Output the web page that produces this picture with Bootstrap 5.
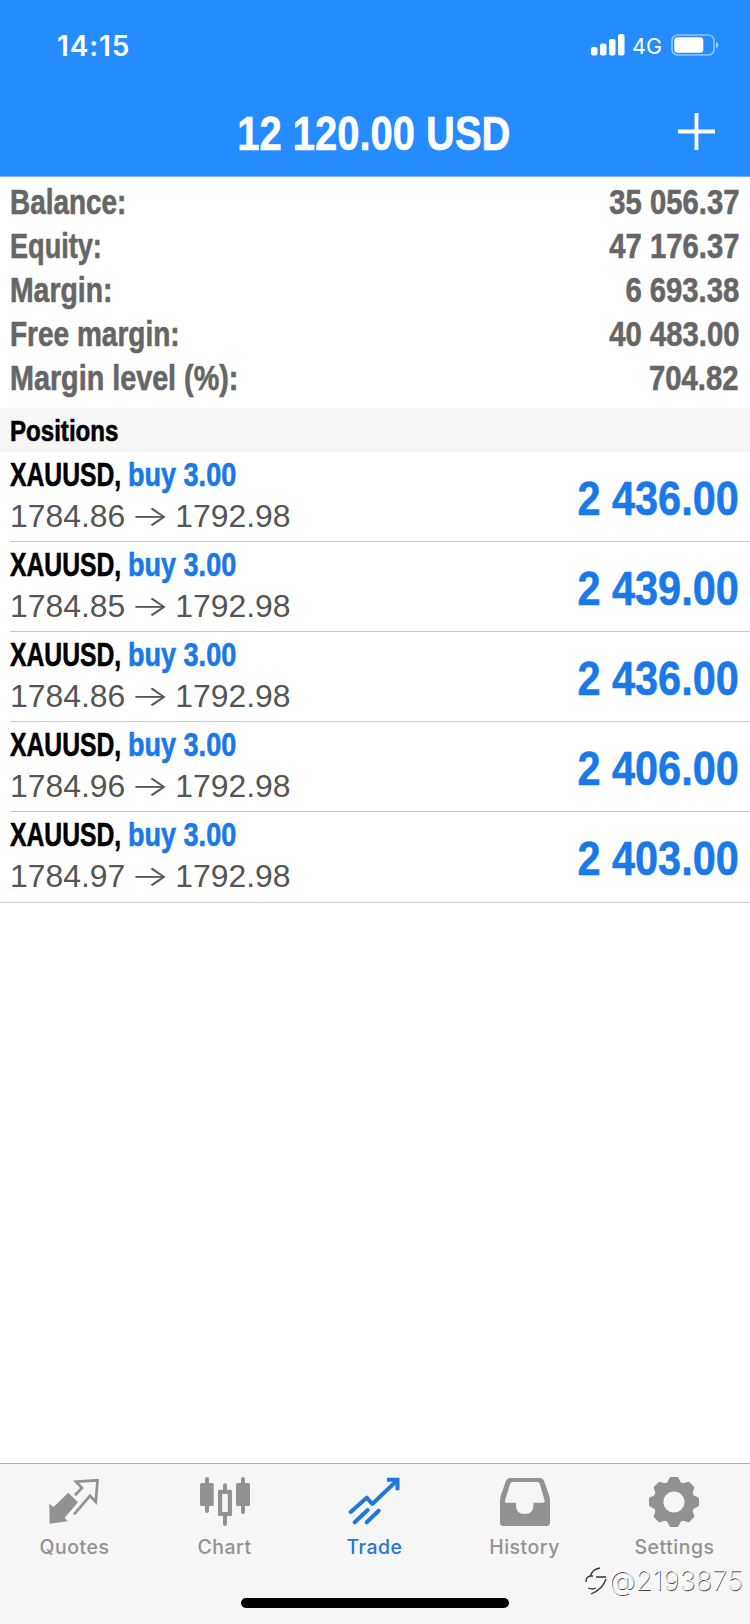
<!DOCTYPE html>
<html lang="en">
<head>
<meta charset="utf-8">
<meta name="viewport" content="width=device-width, initial-scale=1">
<title>Trade</title>
<link href="https://cdn.jsdelivr.net/npm/bootstrap@5.3.0/dist/css/bootstrap.min.css" rel="stylesheet">
<style>
  body { font-family: "Liberation Sans", Arial, sans-serif; background: #fff; color: #000; }
  .screen { width: 750px; height: 1624px; overflow: hidden; }
  .top-area { height: 177px; background: #258cff; border-bottom: 1px solid #7fb0e8; color: #fff; }
  .status { height: 90px; padding: 0 31px 0 57px; font-family: Inter, sans-serif; }
  .clock { font-size: 28px; font-weight: 600; letter-spacing: .9px; line-height: 92px; }
  .net { font-size: 21.5px; line-height: 90px; margin: 2px 9px 0 7px; }
  .title-bar { height: 86px; }
  .plus { right: 35px; top: 23px; line-height: 0; }

  /* condensed lettering */
  .narrow { display: inline-block; font-weight: 700; white-space: nowrap; transform: scaleX(.822); transform-origin: left; -webkit-text-stroke: .6px currentColor; }
  .narrow-end { transform: scaleX(.848); transform-origin: right; }
  .total { font-size: 48.5px; line-height: 86px; transform: translateX(-1px) scaleX(.824); transform-origin: center; }

  .summary { height: 231px; padding: 3px 11px 0 10px; color: #666; font-size: 34.5px; }
  .summary > div { height: 44px; line-height: 44px; }
  .k-balance { transform: scaleX(.809); }
  .k-equity { transform: scaleX(.786); }
  .k-free { transform: scaleX(.812); }
  .k-level { transform: scaleX(.833); }
  .section-title { height: 44px; line-height: 45px; padding-left: 10px; background: #f6f6f6; font-size: 30px; }
  .section-title .narrow { transform: scaleX(.803); }
  .deal { height: 90px; margin-left: 10px; padding-right: 11px; border-bottom: 1px solid #c8c8cb; }
  .deal:last-child { height: 91px; margin-left: 0; padding-left: 10px; }
  .sym { font-size: 32.5px; line-height: 40px; padding-top: 3px; height: 44px; }
  .ticker { width: 118px; }
  .ticker .narrow { transform: scaleX(.76); }
  .side { color: #1a79e8; transform: scaleX(.832); }
  .quote-row { font-size: 31.9px; line-height: 40px; color: #555; height: 40px; white-space: nowrap; }
  .to { display: inline-block; width: 50px; line-height: 30px; text-align: center; font-family: Inter, sans-serif; font-weight: 300; font-size: 29px; transform: translateY(-1px) scaleX(1.42); }
  .profit { font-size: 48.5px; line-height: 92px; color: #1a79e8; transform: scaleX(.855); }

  .tabs { height: 161px; background: #f6f6f6; border-top: 1px solid #b2b2b2; }
  .tab { width: 150px; color: #929292; font: 500 19.4px/24px Inter, sans-serif; letter-spacing: .55px; padding-top: 12px; }
  .tab svg { display: block; margin: 0 auto 5px; }
  .tab span { display: block; margin-left: -1px; }
  .tab.on { color: #2277dc; }
  .home { left: 241px; top: 134px; width: 268px; height: 10px; border-radius: 5px; background: #000; }
  .stamp { left: 584px; top: 101px; color: #fbfbfb; font: 200 27px/32px Inter, sans-serif; letter-spacing: .3px; text-shadow: .7px .8px .6px #444; white-space: nowrap; }
</style>
</head>
<body>
<main class="screen d-flex flex-column">
  <header class="top-area">
    <div class="status d-flex justify-content-between">
      <span class="clock">14:15</span>
      <div class="d-flex align-items-center">
        <svg width="34" height="22" viewBox="0 0 34 22" fill="#fff"><rect x="0" y="13" width="6.5" height="8.5" rx="2"/><rect x="9" y="9.5" width="6.5" height="12" rx="2"/><rect x="18" y="5" width="6.5" height="16.5" rx="2"/><rect x="27" y="0" width="6.5" height="21.5" rx="2"/></svg>
        <span class="net">4G</span>
        <svg width="48" height="22" viewBox="0 0 48 22"><rect x="1" y="1" width="42" height="20" rx="5.5" fill="none" stroke="#fff" stroke-opacity=".5" stroke-width="1.6"/><rect x="3.3" y="3.3" width="29" height="15.4" rx="3" fill="#fff"/><path d="M45 7.5q2.5 1 2.5 3.5t-2.5 3.5z" fill="#fff" fill-opacity=".55"/></svg>
      </div>
    </div>
    <div class="title-bar position-relative text-center">
      <span class="narrow total">12 120.00 USD</span>
      <span class="plus position-absolute"><svg width="37" height="37"><path d="M18.5 0v37M0 18.5h37" stroke="#fff" stroke-width="3.8"/></svg></span>
    </div>
  </header>

  <section class="summary">
    <div class="d-flex justify-content-between"><span class="narrow k-balance">Balance:</span><span class="narrow narrow-end">35 056.37</span></div>
    <div class="d-flex justify-content-between"><span class="narrow k-equity">Equity:</span><span class="narrow narrow-end">47 176.37</span></div>
    <div class="d-flex justify-content-between"><span class="narrow">Margin:</span><span class="narrow narrow-end">6 693.38</span></div>
    <div class="d-flex justify-content-between"><span class="narrow k-free">Free margin:</span><span class="narrow narrow-end">40 483.00</span></div>
    <div class="d-flex justify-content-between"><span class="narrow k-level">Margin level (%):</span><span class="narrow narrow-end">704.82</span></div>
  </section>
  <div class="section-title"><span class="narrow">Positions</span></div>

  <section class="flex-grow-1">
    <div class="deal d-flex justify-content-between">
      <div><div class="sym d-flex"><span class="ticker"><span class="narrow">XAUUSD,</span></span><span class="narrow side">buy 3.00</span></div><div class="quote-row">1784.86<span class="to">→</span>1792.98</div></div>
      <span class="narrow narrow-end profit">2 436.00</span>
    </div>
    <div class="deal d-flex justify-content-between">
      <div><div class="sym d-flex"><span class="ticker"><span class="narrow">XAUUSD,</span></span><span class="narrow side">buy 3.00</span></div><div class="quote-row">1784.85<span class="to">→</span>1792.98</div></div>
      <span class="narrow narrow-end profit">2 439.00</span>
    </div>
    <div class="deal d-flex justify-content-between">
      <div><div class="sym d-flex"><span class="ticker"><span class="narrow">XAUUSD,</span></span><span class="narrow side">buy 3.00</span></div><div class="quote-row">1784.86<span class="to">→</span>1792.98</div></div>
      <span class="narrow narrow-end profit">2 436.00</span>
    </div>
    <div class="deal d-flex justify-content-between">
      <div><div class="sym d-flex"><span class="ticker"><span class="narrow">XAUUSD,</span></span><span class="narrow side">buy 3.00</span></div><div class="quote-row">1784.96<span class="to">→</span>1792.98</div></div>
      <span class="narrow narrow-end profit">2 406.00</span>
    </div>
    <div class="deal d-flex justify-content-between">
      <div><div class="sym d-flex"><span class="ticker"><span class="narrow">XAUUSD,</span></span><span class="narrow side">buy 3.00</span></div><div class="quote-row">1784.97<span class="to">→</span>1792.98</div></div>
      <span class="narrow narrow-end profit">2 403.00</span>
    </div>
  </section>

  <nav class="tabs position-relative d-flex align-items-start">
    <div class="tab text-center">
      <svg width="54" height="54"><path fill="currentColor" d="M1.3 27.7L5.5 31 20.3 16.7 30 26.3 16.7 41.7l3 3.6L1.7 47.7z"/><path fill="none" stroke="currentColor" stroke-width="2.7" d="M27 19.3l7-7.3-6-6.3 21.5-1.4-1.7 21.5-5.800-6L26 38.3"/></svg>
      <span>Quotes</span>
    </div>
    <div class="tab text-center">
      <svg width="54" height="54" fill="currentColor"><rect x="2" y="7" width="13.7" height="23" rx="1.5"/><rect x="7" y="1" width="4" height="36" rx="2"/><path fill-rule="evenodd" d="M21.5 13.7h11q1.5 0 1.5 1.5v23.3q0 1.5-1.5 1.5h-11q-1.5 0-1.5-1.5V15.2q0-1.5 1.5-1.5zM24.2 18v18h5.6V18z"/><rect x="25" y="7.3" width="4" height="9" rx="2"/><rect x="25" y="38" width="4" height="12" rx="2"/><rect x="38" y="7" width="14" height="23" rx="1.5"/><rect x="43" y="1" width="4" height="37" rx="2"/></svg>
      <span>Chart</span>
    </div>
    <div class="tab on text-center">
      <svg width="54" height="54" fill="none" stroke="currentColor" stroke-width="4" stroke-linecap="round"><path stroke-linejoin="round" d="M2.7 36l16-14.3 5.6 6.3L49 4.5"/><path stroke-linecap="butt" d="M39 3.7h10.5v10.5"/><path d="M19.7 34L6.7 46.3M30.7 34.7l-12 11.6"/></svg>
      <span>Trade</span>
    </div>
    <div class="tab text-center">
      <svg width="54" height="54"><path fill="currentColor" fill-rule="evenodd" d="M12.5 2h29q3.5 0 4.7 3.3L51 19q1 3 1 6v21.5q0 3.5-3.5 3.5h-43Q2 50 2 46.5V25q0-3 1-6L7.8 5.3Q9 2 12.5 2zm1.8 4q-1.5 0-2 1.5L7 24.5q-.6 2.2 1.5 2.2h9.500v3q0 8.300 8.700 8.300t8.700-8.300v-3H45q2.200 0 1.600-2.200L41.700 7.500Q41.200 6 39.700 6z"/></svg>
      <span>History</span>
    </div>
    <div class="tab text-center">
      <svg width="54" height="54" viewBox="0 0 54 54" fill="currentColor"><defs><path id="tooth" d="M17.5 8Q20 6 20.8 3.2 21.4 1 23 1h6q1.6 0 2.2 2.2Q32 6 34.5 8z"/></defs><path fill-rule="evenodd" d="M26 5.5a20.5 20.5 0 1 0 0 41 20.5 20.5 0 1 0 0-41zm0 9.900a10.6 10.6 0 1 1 0 21.2 10.6 10.6 0 1 1 0-21.2z"/><use href="#tooth"/><use href="#tooth" transform="rotate(45 26 26)"/><use href="#tooth" transform="rotate(90 26 26)"/><use href="#tooth" transform="rotate(135 26 26)"/><use href="#tooth" transform="rotate(180 26 26)"/><use href="#tooth" transform="rotate(225 26 26)"/><use href="#tooth" transform="rotate(270 26 26)"/><use href="#tooth" transform="rotate(315 26 26)"/></svg>
      <span>Settings</span>
    </div>
    <div class="home position-absolute"></div>
    <div class="stamp position-absolute d-flex"><svg width="25" height="32" viewBox="0 0 25 32" fill="none"><path d="M4 17q-1 8 5 7.500 8-1 9-10" stroke="#fff" stroke-width="3"/><path d="M2 17q0-6 5-6h2M6 12q2-8 10-9M12 12h10M22 14Q19 24 7 29M4 23q5 2 8 0" stroke="#333" stroke-width="1.3"/></svg><span>@2193875</span></div>
  </nav>
</main>
<script src="https://cdn.jsdelivr.net/npm/bootstrap@5.3.0/dist/js/bootstrap.bundle.min.js"></script>
</body>
</html>
